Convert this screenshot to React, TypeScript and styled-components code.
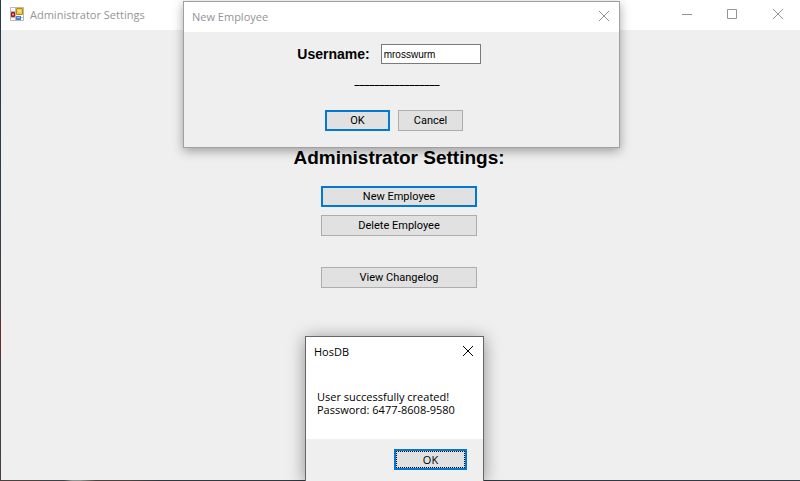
import React from "react";
import styled, { createGlobalStyle } from "styled-components";

const GlobalStyle = createGlobalStyle`
  * { box-sizing: border-box; }
  body {
    margin: 0;
    background: #2f3e50;
    color: #000;
    font-family: "Liberation Sans", Arial, sans-serif;
    font-size: 11px;
  }
`;

const Desktop = styled.div`
  position: relative;
  display: flex;
  min-height: 100vh;
  padding: 0 0 1px 1px;
  overflow: hidden;
  background:
    linear-gradient(90deg, #50403a 0 5%, #3d4045 5% 8%, #8e9490 9% 10%, #50403a 12% 16%, #2f3742 20%, #303b47) bottom / 100% 1px no-repeat,
    linear-gradient(#263b52 0 20%, #3d4045 62%, #6b2b2c 68% 72%, #3d4045 76% 94%, #50403a);
`;

const MainWindow = styled.main`
  flex: 1;
  display: flex;
  flex-direction: column;
  background: #efefef;
`;

const TitleBar = styled.header<{ $active?: boolean }>`
  display: flex;
  align-items: center;
  height: 30px;
  background: #fff;
  color: ${(p) => (p.$active ? "#000" : "#949494")};
  font-family: "Open Sans", sans-serif;
`;

const Title = styled.h2<{ $inset: number }>`
  flex: 1;
  margin: 0 0 0 ${(p) => p.$inset}px;
  font-size: 11px;
  font-weight: 400;
  line-height: 16px;
  white-space: nowrap;
`;

const CaptionButton = styled.button<{ $width: number }>`
  display: flex;
  align-items: center;
  justify-content: center;
  width: ${(p) => p.$width}px;
  height: 30px;
  padding: 0 0 2px;
  border: 0;
  background: transparent;
  color: inherit;
`;

const AppIcon = styled.svg`
  width: 14px;
  height: 14px;
  margin: 0 0 2px 9px;
`;

const Settings = styled.div`
  display: flex;
  flex-direction: column;
  align-items: center;
  gap: 8px;
  padding: 116px 3px 0 0;
`;

const Heading = styled.h1`
  margin: 0 0 8px;
  font-size: 19px;
  font-weight: 700;
  line-height: 24px;
  white-space: nowrap;
`;

const PushButton = styled.button<{ $width: number; $primary?: boolean }>`
  width: ${(p) => p.$width}px;
  height: 21px;
  padding: 0;
  border: ${(p) => (p.$primary ? "2px solid #0078d7" : "1px solid #adadad")};
  background: #e1e1e1;
  color: #000;
  font-family: Roboto, "Liberation Sans", sans-serif;
  font-size: 11px;
  line-height: 16px;
`;

const Spacer = styled.div`
  height: 15px;
`;

const EmployeeDialog = styled.section`
  position: absolute;
  top: 1px;
  left: calc(50% - 217px);
  width: 437px;
  border: 1px solid #a0a0a0;
  background: #efefef;
  box-shadow: 0 3px 10px rgba(0, 0, 0, 0.35);
`;

const DialogForm = styled.form`
  display: flex;
  flex-direction: column;
  align-items: center;
  padding: 12px 15px 16px 0;
`;

const Field = styled.div`
  display: flex;
  align-items: center;
  gap: 11px;
  margin-right: 10px;
`;

const FieldLabel = styled.label`
  font-size: 14px;
  font-weight: 700;
  line-height: 20px;
`;

const TextBox = styled.input`
  width: 100px;
  height: 20px;
  padding: 0 2px;
  border: 1px solid #7a7a7a;
  border-radius: 0;
  background: #fff;
  color: #000;
  font-family: "Liberation Sans", Arial, sans-serif;
  font-size: 10px;
  outline: 0;
`;

const Underline = styled.p`
  margin: 10px 0 24px 6px;
  font-family: "DejaVu Sans", sans-serif;
  font-size: 10px;
  font-weight: 700;
  line-height: 12px;
`;

const ButtonRow = styled.div`
  display: flex;
  gap: 8px;
`;

const MessageBox = styled.section`
  position: absolute;
  top: 336px;
  left: calc(50% - 95px);
  width: 179px;
  border: 1px solid #666;
  border-bottom: 0;
  background: #fff;
  box-shadow: 0 2px 16px rgba(0, 0, 0, 0.4);
`;

const Message = styled.p`
  margin: 0;
  padding: 23px 11px;
  font-family: "Open Sans", sans-serif;
  font-size: 11px;
  line-height: 13px;
  white-space: nowrap;
`;

const MessageFooter = styled.footer`
  display: flex;
  justify-content: flex-end;
  padding: 10px 16px 12px;
  background: #efefef;
`;

const FocusedButton = styled(PushButton)`
  font-family: "Open Sans", sans-serif;
  outline: 1px dotted #000;
  outline-offset: -3px;
`;

const CloseGlyph = () => (
  <svg width="10" height="10" viewBox="0 0 10 10" fill="none" stroke="currentColor" aria-hidden="true">
    <path d="M0 0l10 10M10 0L0 10" />
  </svg>
);

const FormsIcon = () => (
  <AppIcon viewBox="0 0 14 14" aria-hidden="true">
    <path d="M.5.5h13v13H.5zM5.5.5v13M.5 4.5h5M.5 10.5h13" fill="#fff" stroke="#b8b8b8" />
    <path d="M6.5 1.5h6v6h-6z" fill="#f8c83c" stroke="#b88a10" />
    <path d="M8 3h3v2H8z" fill="#ffe27a" />
    <path d="M1.5 5.5h3v4h-3z" fill="#d84038" stroke="#a01818" />
    <path d="M2 7h2v1H2z" fill="#ff9a80" />
    <path d="M6 9h5v4H6z" fill="#4c82dc" />
    <path d="M7 10h3v1H7z" fill="#9cc0fa" />
  </AppIcon>
);

export default function App() {
  return (
    <Desktop>
      <GlobalStyle />
      <MainWindow>
        <TitleBar>
          <FormsIcon />
          <Title $inset={6}>Administrator Settings</Title>
          <CaptionButton $width={42} aria-label="Minimize">
            <svg width="10" height="10" viewBox="0 0 10 10" stroke="currentColor">
              <path d="M0 5.5h10" />
            </svg>
          </CaptionButton>
          <CaptionButton $width={48} aria-label="Maximize">
            <svg width="10" height="10" viewBox="0 0 10 10" fill="none" stroke="currentColor">
              <path d="M.5.5h9v9h-9z" />
            </svg>
          </CaptionButton>
          <CaptionButton $width={44} aria-label="Close">
            <CloseGlyph />
          </CaptionButton>
        </TitleBar>
        <Settings>
          <Heading>Administrator Settings:</Heading>
          <PushButton $width={156} $primary>New Employee</PushButton>
          <PushButton $width={156}>Delete Employee</PushButton>
          <Spacer />
          <PushButton $width={156}>View Changelog</PushButton>
        </Settings>
      </MainWindow>

      <EmployeeDialog role="dialog" aria-label="New Employee">
        <TitleBar>
          <Title $inset={8}>New Employee</Title>
          <CaptionButton $width={30} aria-label="Close">
            <CloseGlyph />
          </CaptionButton>
        </TitleBar>
        <DialogForm>
          <Field>
            <FieldLabel htmlFor="username">Username:</FieldLabel>
            <TextBox id="username" defaultValue="mrosswurm" spellCheck={false} />
          </Field>
          <Underline>_________________</Underline>
          <ButtonRow>
            <PushButton type="button" $width={65} $primary>OK</PushButton>
            <PushButton type="button" $width={65}>Cancel</PushButton>
          </ButtonRow>
        </DialogForm>
      </EmployeeDialog>

      <MessageBox role="alertdialog" aria-label="HosDB">
        <TitleBar $active>
          <Title $inset={8}>HosDB</Title>
          <CaptionButton $width={30} aria-label="Close">
            <CloseGlyph />
          </CaptionButton>
        </TitleBar>
        <Message>
          User successfully created!
          <br />
          Password: 6477-8608-9580
        </Message>
        <MessageFooter>
          <FocusedButton $width={73} $primary>OK</FocusedButton>
        </MessageFooter>
      </MessageBox>
    </Desktop>
  );
}
